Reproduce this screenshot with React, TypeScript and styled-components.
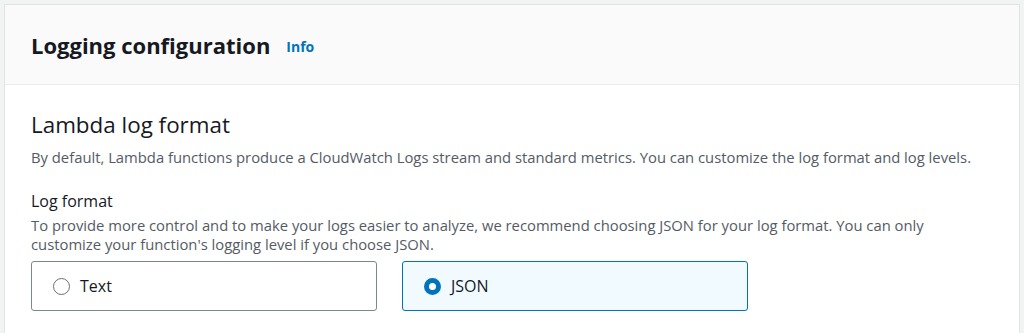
import styled, { createGlobalStyle } from "styled-components";

const GlobalStyle = createGlobalStyle`
  html, body {
    margin: 0;
    padding: 0;
    background: #f2f3f3;
  }
  body {
    font-family: "Open Sans", "Noto Sans", Arial, sans-serif;
    color: #16191f;
  }
`;

const Page = styled.div`
  padding: 4px 4px 0 4px;
`;

const Card = styled.section`
  background: #ffffff;
  border: 1px solid #e1e4e4;
  border-bottom: none;
  min-height: 340px;
`;

const Header = styled.div`
  height: 79px;
  background: #fafafa;
  border-bottom: 1px solid #eaeded;
  display: flex;
  align-items: center;
  gap: 16px;
  padding: 0 26px;
`;

const Title = styled.h2`
  margin: 0;
  font-size: 22px;
  line-height: 28px;
  font-weight: 700;
  color: #16191f;
`;

const InfoLink = styled.a`
  font-size: 14px;
  font-weight: 700;
  color: #0073bb;
  text-decoration: none;
  margin-top: 4px;
`;

const Body = styled.div`
  padding: 26px 26px 0 26px;
  display: flex;
  flex-direction: column;
`;

const SectionTitle = styled.h3`
  margin: 0;
  font-size: 22.4px;
  line-height: 28px;
  font-weight: 400;
  color: #16191f;
`;

const Description = styled.p<{ $gap?: number }>`
  margin: ${(p) => p.$gap ?? 0}px 0 0 0;
  font-size: 14.8px;
  line-height: 19px;
  color: #545b64;
`;

const FieldLabel = styled.div`
  margin-top: 23px;
  font-size: 16px;
  line-height: 22px;
  color: #16191f;
`;

const Tiles = styled.div`
  margin-top: 7px;
  display: grid;
  grid-template-columns: 346px 346px;
  gap: 25px;
`;

const Tile = styled.label<{ $checked?: boolean }>`
  box-sizing: border-box;
  height: 50px;
  display: flex;
  align-items: center;
  gap: 10px;
  padding-left: 21px;
  border: 1px solid ${(p) => (p.$checked ? "#0073bb" : "#7d868c")};
  border-radius: 3px;
  background: ${(p) => (p.$checked ? "#f1faff" : "#ffffff")};
  cursor: pointer;
`;

const Radio = styled.span<{ $checked?: boolean }>`
  box-sizing: border-box;
  width: 17px;
  height: 17px;
  border-radius: 50%;
  border: ${(p) => (p.$checked ? "5px solid #0073bb" : "1.5px solid #687078")};
  background: #ffffff;
  flex-shrink: 0;
`;

const TileText = styled.span`
  font-size: 16px;
  line-height: 22px;
  color: #16191f;
`;

export default function App() {
  return (
    <>
      <GlobalStyle />
      <Page>
        <Card>
          <Header>
            <Title>Logging configuration</Title>
            <InfoLink href="#">Info</InfoLink>
          </Header>
          <Body>
            <SectionTitle>Lambda log format</SectionTitle>
            <Description $gap={9}>
              By default, Lambda functions produce a CloudWatch Logs stream and
              standard metrics. You can customize the log format and log levels.
            </Description>
            <FieldLabel>Log format</FieldLabel>
            <Description $gap={4}>
              To provide more control and to make your logs easier to analyze,
              we recommend choosing JSON for your log format. You can only
              customize your function's logging level if you choose JSON.
            </Description>
            <Tiles>
              <Tile>
                <Radio />
                <TileText>Text</TileText>
              </Tile>
              <Tile $checked>
                <Radio $checked />
                <TileText>JSON</TileText>
              </Tile>
            </Tiles>
          </Body>
        </Card>
      </Page>
    </>
  );
}
